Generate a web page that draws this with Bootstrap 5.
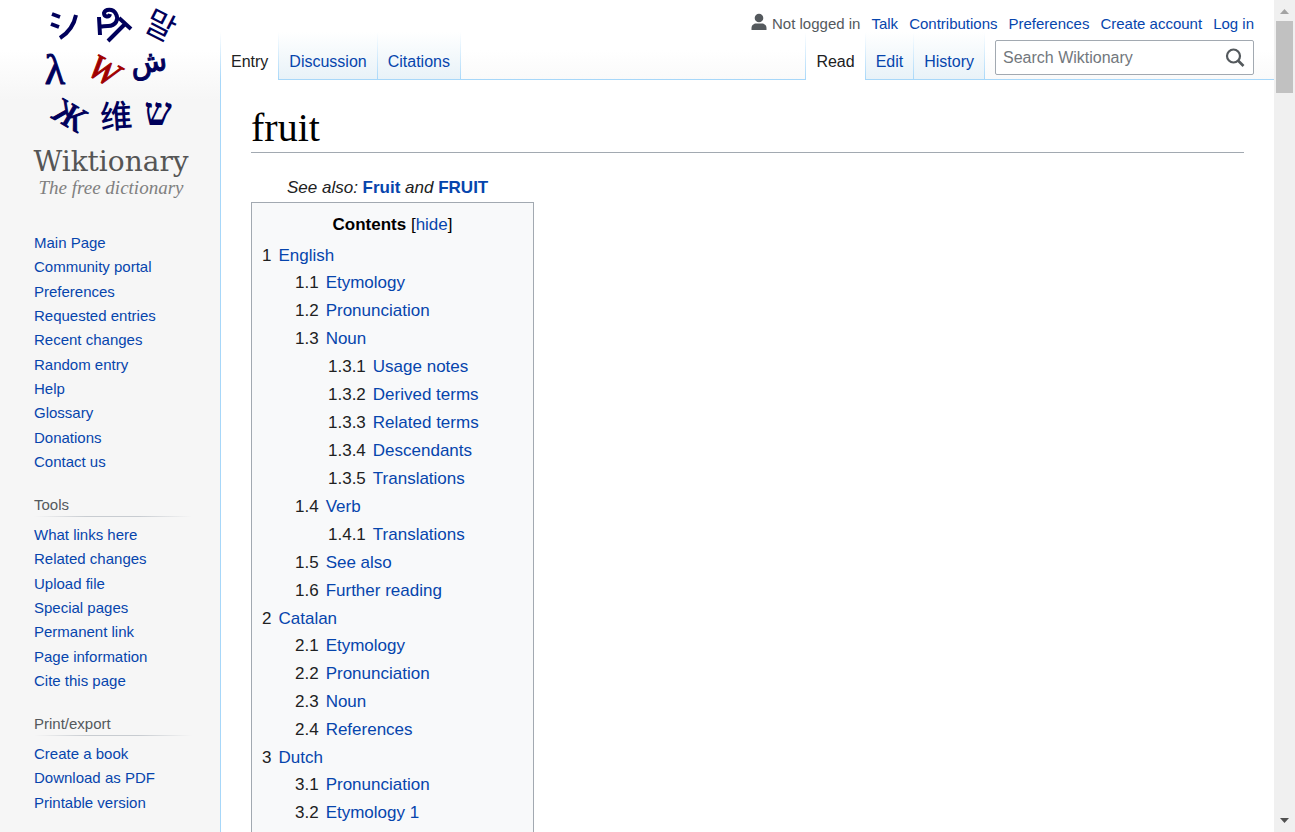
<!DOCTYPE html>
<html lang="en">
<head>
<meta charset="utf-8">
<meta name="viewport" content="width=device-width, initial-scale=1">
<title>fruit - Wiktionary</title>
<link href="https://cdn.jsdelivr.net/npm/bootstrap@5.3.0/dist/css/bootstrap.min.css" rel="stylesheet">
<style>
:root { --line: #a7d7f9; --link: #0645ad; --rule: #a2a9b1; }
body { font-family: "Liberation Sans", Arial, sans-serif; font-size: 17px; line-height: 28px; color: #202122; background: #fff; }
a { color: var(--link); text-decoration: none; }
a:hover { text-decoration: underline; }
.page-area { background: linear-gradient(#fff 50px, #f6f6f6 100px); }

/* sidebar */
.side-col { width: 220px; font-size: 15px; line-height: 24px; }
.site-logo { height: 231px; }
.side-block { padding-left: 34px; padding-right: 28px; }
.side-block li:nth-child(3n) { padding-top: 1px; }
.side-block h2 { font-size: 15px; line-height: 23px; color: #54595d; margin: 19px 0 6px; padding-bottom: 1px; font-weight: 400;
  background: linear-gradient(to right, rgba(200,204,209,0), #c8ccd1 33%, #c8ccd1 66%, rgba(200,204,209,0)) bottom / 100% 1px no-repeat; }

/* header */
.personal-bar { height: 32px; padding-top: 16px; font-size: 15px; gap: 11px; }
.personal-bar li { line-height: 16px; }
.anon-user { color: #54595d; }
.tab-row { height: 48px; background: linear-gradient(var(--line), var(--line)) bottom / 100% 1px no-repeat; font-size: 16px; }
.tab-set li { padding-right: 1px; background: linear-gradient(#fff, var(--line)) right / 1px 100% no-repeat; }
.tab-set li:first-child { padding-left: 1px; background: linear-gradient(#fff, var(--line)) left / 1px 100% no-repeat, linear-gradient(#fff, var(--line)) right / 1px 100% no-repeat; }
.tab-set a { display: block; height: 47px; line-height: 24px; padding: 18px 10px 0; background: linear-gradient(#fff, #e8f2f8); }
.tab-set a.current { height: 48px; color: #202122; background: #fff; }
.search-box { width: 259px; height: 35px; margin: 8px 20px 0 10px; background: #fff; border: 1px solid var(--rule); border-radius: 2px; }
.search-box input { font-size: 16px; padding: 0 0 0 7px; color: #202122; }
.search-box input::placeholder { color: #72777d; opacity: 1; }

/* article */
.article { border-left: 1px solid var(--line); padding: 24px 30px 0; }
.article h1 { font-family: "Liberation Serif", Georgia, serif; font-size: 40px; line-height: 48px; color: #000; border-bottom: 1px solid var(--rule); margin: 0 0 21px; }
.see-also { padding-left: 36px; }
.toc-box { width: 283px; border: 1px solid var(--rule); background: #f8f9fa; padding: 8px 10px; }
.toc-title { color: #000; margin-bottom: 3px; }
.toc-toggle { color: var(--link); }
.toc-box ul { list-style: none; margin: 0; padding: 0; }
.toc-box ul ul { margin: -1px 0 0 33px; }
.toc-box ul ul ul { margin-top: 0; }
.toc-box a span { color: #202122; padding-right: 7px; }
.toc-box .toc-toggle { line-height: inherit; font-size: inherit; }

/* scroll track */
.track { width: 21px; background: #f0f0f0; }
.track-thumb { width: 17px; height: 72px; background: #c1c1c1; }
</style>
</head>
<body>
<div class="d-flex vh-100 overflow-hidden">
 <div class="page-area d-flex flex-grow-1 overflow-hidden">
  <aside class="side-col flex-shrink-0">
   <a class="d-block site-logo" href="#" aria-label="Wiktionary main page">
    <svg width="220" height="210" viewBox="0 0 220 210" text-anchor="middle">
     <g fill="#00005b" font-size="32">
      <g fill="none" stroke="#00005b" stroke-width="4"><path d="M52 14l8 3M51 24l8 3"/><path d="M76 15C74 25 68 33 60 38"/></g>
      <g fill="none" stroke="#00005b" stroke-width="4"><path d="M99 17l1 18M99 27c5-1 5-1 9-1c8 0 11-7 8-12c-3-6-11-5-12-1c0 4 5 5 6 1"/><path d="M108 41l17-17M119 18l12 11"/></g>
      <text transform="translate(160 26) rotate(27)" y="11" font-size="32" font-family="Noto Sans CJK KR, sans-serif">말</text>
      <text x="55" y="84" font-size="42" stroke="#00005b" font-family="Liberation Serif, serif">λ</text>
      <text transform="translate(104 70) rotate(29)" y="12" font-size="35" font-style="italic" font-family="Liberation Serif, serif" fill="#a00000" stroke="#a00000">W</text>
      <text transform="translate(150 72) rotate(-8)" font-size="30" stroke="#00005b" font-family="DejaVu Sans, sans-serif">ش</text>
      <text transform="translate(70 115) rotate(30)" y="12" font-size="35" stroke="#00005b" font-family="Liberation Serif, serif">Ж</text>
      <text transform="translate(116 116) rotate(-4)" y="12" font-size="32" font-weight="500" font-family="Noto Sans CJK SC, sans-serif">维</text>
      <text x="158" y="125" font-size="39" font-weight="bold" font-family="Liberation Serif, DejaVu Sans, serif">ש</text>
     </g>
     <text x="111" y="171" font-size="28" fill="#555" font-family="DejaVu Serif, serif">Wiktionary</text>
     <text x="111" y="194" font-size="19" fill="#808080" font-style="italic" font-family="Liberation Serif, serif">The free dictionary</text>
    </svg>
   </a>
   <nav class="side-block" aria-label="Navigation">
    <ul class="list-unstyled m-0">
     <li><a href="#">Main Page</a></li><li><a href="#">Community portal</a></li><li><a href="#">Preferences</a></li><li><a href="#">Requested entries</a></li><li><a href="#">Recent changes</a></li><li><a href="#">Random entry</a></li><li><a href="#">Help</a></li><li><a href="#">Glossary</a></li><li><a href="#">Donations</a></li><li><a href="#">Contact us</a></li>
    </ul>
    <h2>Tools</h2>
    <ul class="list-unstyled m-0">
     <li><a href="#">What links here</a></li><li><a href="#">Related changes</a></li><li><a href="#">Upload file</a></li><li><a href="#">Special pages</a></li><li><a href="#">Permanent link</a></li><li><a href="#">Page information</a></li><li><a href="#">Cite this page</a></li>
    </ul>
    <h2>Print/export</h2>
    <ul class="list-unstyled m-0">
     <li><a href="#">Create a book</a></li><li><a href="#">Download as PDF</a></li><li><a href="#">Printable version</a></li>
    </ul>
   </nav>
  </aside>

  <div class="d-flex flex-column flex-grow-1">
   <header>
    <ul class="personal-bar list-unstyled d-flex justify-content-end align-items-start m-0 pe-3 me-1">
     <li class="anon-user d-flex align-items-start gap-1 text-nowrap">
      <svg class="flex-shrink-0" width="18" height="16" viewBox="0 0 18 16" overflow="visible" fill="#54595d" aria-hidden="true"><circle cx="9" cy="2" r="4.300"/><path d="M1.500 14v-2C1.500 9 4 7.500 6 7.500h6c2 0 4.500 1.500 4.500 4.500V14z"/></svg>
      <span>Not logged in</span></li>
     <li><a href="#">Talk</a></li><li><a href="#">Contributions</a></li><li><a href="#">Preferences</a></li><li><a href="#">Create account</a></li><li><a href="#">Log in</a></li>
    </ul>
    <div class="tab-row d-flex">
     <ul class="tab-set list-unstyled d-flex m-0 me-auto">
      <li><a class="current" href="#">Entry</a></li><li><a href="#">Discussion</a></li><li><a href="#">Citations</a></li>
     </ul>
     <ul class="tab-set list-unstyled d-flex m-0">
      <li><a class="current" href="#">Read</a></li><li><a href="#">Edit</a></li><li><a href="#">History</a></li>
     </ul>
     <form class="search-box d-flex align-items-center" role="search">
      <input class="form-control border-0 shadow-none bg-transparent h-100" type="search" placeholder="Search Wiktionary" aria-label="Search Wiktionary">
      <button class="btn border-0 p-0 me-2 d-flex" type="button" aria-label="Search">
       <svg width="20" height="20" viewBox="0 0 20 20" fill="none" stroke="#54595d" aria-hidden="true"><circle cx="8.500" cy="8" r="6.500" stroke-width="2.200"/><path d="M13 12.500l5.500 5.500" stroke-width="2.600"/></svg>
      </button>
     </form>
    </div>
   </header>
   <main class="article bg-white flex-grow-1">
    <h1>fruit</h1>
    <div class="see-also"><i>See also: </i><b><a href="#">Fruit</a></b><i> and </i><b><a href="#">FRUIT</a></b></div>
    <nav class="toc-box" aria-label="Contents">
     <div class="toc-title text-center"><b>Contents</b> [<button type="button" class="toc-toggle btn btn-link border-0 p-0 text-decoration-none align-baseline">hide</button>]</div>
     <ul>
      <li><a href="#"><span>1</span>English</a>
       <ul>
        <li><a href="#"><span>1.1</span>Etymology</a></li>
        <li><a href="#"><span>1.2</span>Pronunciation</a></li>
        <li><a href="#"><span>1.3</span>Noun</a>
         <ul>
          <li><a href="#"><span>1.3.1</span>Usage notes</a></li>
          <li><a href="#"><span>1.3.2</span>Derived terms</a></li>
          <li><a href="#"><span>1.3.3</span>Related terms</a></li>
          <li><a href="#"><span>1.3.4</span>Descendants</a></li>
          <li><a href="#"><span>1.3.5</span>Translations</a></li>
         </ul></li>
        <li><a href="#"><span>1.4</span>Verb</a>
         <ul><li><a href="#"><span>1.4.1</span>Translations</a></li></ul></li>
        <li><a href="#"><span>1.5</span>See also</a></li>
        <li><a href="#"><span>1.6</span>Further reading</a></li>
       </ul></li>
      <li><a href="#"><span>2</span>Catalan</a>
       <ul>
        <li><a href="#"><span>2.1</span>Etymology</a></li>
        <li><a href="#"><span>2.2</span>Pronunciation</a></li>
        <li><a href="#"><span>2.3</span>Noun</a></li>
        <li><a href="#"><span>2.4</span>References</a></li>
       </ul></li>
      <li><a href="#"><span>3</span>Dutch</a>
       <ul>
        <li><a href="#"><span>3.1</span>Pronunciation</a></li>
        <li><a href="#"><span>3.2</span>Etymology 1</a></li>
       </ul></li>
     </ul>
    </nav>
   </main>
  </div>
 </div>
 <div class="track d-flex flex-column align-items-center flex-shrink-0" aria-hidden="true">
  <svg width="21" height="21" viewBox="0 0 21 21"><path d="M6 14l4.500-5L15 14z" fill="#a3a3a3"/></svg>
  <div class="track-thumb"></div>
  <svg class="mt-auto" width="21" height="21" viewBox="0 0 21 21"><path d="M6 7l4.500 5L15 7z" fill="#505050"/></svg>
 </div>
</div>
<script src="https://cdn.jsdelivr.net/npm/bootstrap@5.3.0/dist/js/bootstrap.bundle.min.js"></script>
</body>
</html>
